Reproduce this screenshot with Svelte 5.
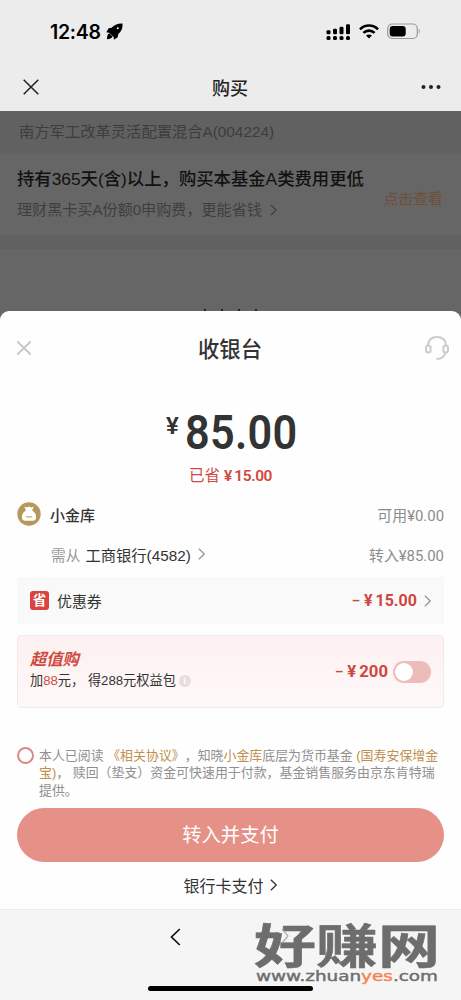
<script>
  let agreed = $state(false);
  let promoOn = $state(false);

  const bars = [4, 5.5, 7.5, 10];
</script>

{#snippet chevron(size, color, width)}
  <svg class="chevron" width={size * 0.6} height={size} viewBox="0 0 6 10">
    <path d="M0.7 0.7 L5.2 5 L0.7 9.3" fill="none" stroke={color} stroke-width={width} />
  </svg>
{/snippet}

<div class="screen">
  <div class="status">
    <span class="time">12:48</span>
    <svg class="rocket" width="17" height="17" viewBox="0 0 18 18">
      <path d="M17.500 .5C12 .3 8.500 2 6 5L2.800 5.600 .3 9.800l3 .4 4.800 4.600.3 3 4-2.800.6-3.400C16.300 8.800 17.700 6 17.500 .5z" />
      <path d="M3.300 10.800C1.500 12 1.100 14 1 17.200c3-.2 5-.8 6-2.900z" />
      <circle cx="12.500" cy="5.500" r="1.100" fill="#ececec" />
    </svg>
    <div class="status-right">
      <svg width="26" height="18" viewBox="0 0 26 18">
        {#each bars as h, i}
          <rect x={0.500 + i * 6.500} y={11.300 - h} width="4" height={h} rx="1.200" />
          <rect x={0.500 + i * 6.500} y="13" width="4" height="4" rx="1.500" />
        {/each}
      </svg>
      <svg class="wifi" width="20" height="15" viewBox="0 0 20 15">
        <g fill="none" stroke="#000" stroke-width="2.600">
          <path d="M1 5.300C6 .2 14 .2 19 5.300" />
          <path d="M4.400 8.900C7.600 5.800 12.400 5.800 15.600 8.900" />
        </g>
        <path d="M7 11.600C8.800 10 11.200 10 13 11.600L10 14.600z" />
      </svg>
      <svg class="battery" width="34" height="17" viewBox="0 0 34 17">
        <rect x="0.700" y="1" width="29.600" height="14.500" rx="4.500" fill="none" stroke="#999" stroke-width="1.200" />
        <rect x="2.700" y="3" width="16" height="10.500" rx="3" />
        <path d="M31.800 6v4.500c1.300-.6 1.300-3.900 0-4.500z" fill="#999" />
      </svg>
    </div>
  </div>

  <div class="navbar">
    <svg width="16" height="16" viewBox="0 0 16 16">
      <path d="M.7.7l14.600 14.600M15.300.7L.7 15.300" stroke="#222" stroke-width="1.500" />
    </svg>
    <h1>购买</h1>
    <svg width="20" height="6" viewBox="0 0 20 6" fill="#222">
      <circle cx="2.500" cy="3" r="2" /><circle cx="10" cy="3" r="2" /><circle cx="17.500" cy="3" r="2" />
    </svg>
  </div>

  <div class="backdrop">
    <div class="fund">南方军工改革灵活配置混合A(004224)</div>
    <div class="notice">
      <div>
        <div class="notice-title">持有365天(含)以上，购买本基金A类费用更低</div>
        <div class="notice-sub">理财黑卡买A份额0申购费，更能省钱 {@render chevron(12, '#3b3b3b', 0.9)}</div>
      </div>
      <span class="look">点击查看</span>
    </div>
    <div class="gap"></div>
    <div class="peek"><i></i><i></i><i></i><i></i></div>
  </div>

  <div class="sheet-wrap">
    <div class="sheet">
      <div class="sheet-head">
        <svg width="16" height="16" viewBox="0 0 16 16">
          <path d="M1.300 1.300l13.400 13.400M14.700 1.300l-13.400 13.400" stroke="#c4c4c4" stroke-width="1.900" />
        </svg>
        <h2>收银台</h2>
        <svg width="26" height="26" viewBox="0 0 26 26" fill="none" stroke="#ccc" stroke-width="2">
          <path d="M3.800 10.500C4.300 5 8 2 13 2s8.700 3 9.200 8.500" />
          <rect x="2" y="10.500" width="4.600" height="7" rx="2.300" />
          <rect x="19.400" y="10.500" width="4.600" height="7" rx="2.300" />
          <path d="M21.500 17.500C20.500 21.500 17.500 24 12.500 24" />
        </svg>
      </div>

      <div class="amount"><span class="yen">¥</span><span class="num">85.00</span></div>
      <div class="saved">已省<b>¥</b><b class="value">15.00</b></div>

      <div class="row">
        <svg width="24" height="24" viewBox="0 0 24 24">
          <circle cx="12" cy="12" r="11.700" fill="#b5995c" />
          <path d="M7.300 4.600l2.400 1 2.300-1.200 2.300 1.200 2.400-1-1.600 4c2.900 1.500 4.400 4.600 3.900 7.500-.3 1.900-1.300 2.700-3.100 2.700H8.100c-1.800 0-2.800-.8-3.100-2.700-.5-2.900 1-6 3.900-7.500z" fill="#fff" />
          <path d="M8.800 14.700q3.200 .8 6.400 0" fill="none" stroke="#b5995c" stroke-width="1" />
        </svg>
        <span class="account">小金库</span>
        <span class="right">可用¥0.00</span>
      </div>
      <div class="row second">
        <span class="from">需从</span>
        <span class="bank">工商银行(4582)</span>
        {@render chevron(12, '#999', 1.100)}
        <span class="right">转入¥85.00</span>
      </div>

      <div class="coupon">
        <span class="tag">省</span>
        <span class="coupon-name">优惠券</span>
        <span class="price"><em class="minus">–</em><em>¥</em>15.00</span>
        {@render chevron(12, '#999', 1.100)}
      </div>

      <div class="promo">
        <div class="promo-text">
          <div class="promo-title">超值购</div>
          <div class="promo-sub">加<span>88</span>元， 得288元权益包<i>i</i></div>
        </div>
        <span class="price big"><em class="minus">–</em><em>¥</em>200</span>
        <button class="switch" class:on={promoOn} aria-label="超值购" onclick={() => (promoOn = !promoOn)}><i></i></button>
      </div>

      <div class="terms">
        <button class="radio" class:agreed aria-label="同意" onclick={() => (agreed = !agreed)}></button>
        <p>
          本人已阅读 <a href="#agreement">《相关协议》</a>，知晓<a href="#vault">小金库</a>底层为货币基金 <a href="#fund">(国寿安保增金<br />宝)</a>， 赎回（垫支）资金可快速用于付款，基金销售服务由京东肯特瑞<br />提供。
        </p>
      </div>

      <button class="pay">转入并支付</button>
      <div class="bank-pay">银行卡支付 {@render chevron(12, '#333', 1.100)}</div>
    </div>
  </div>

  <div class="toolbar">
    <svg class="back" width="11" height="18" viewBox="0 0 11 18">
      <path d="M9.800 1L1.500 9l8.300 8" fill="none" stroke="#111" stroke-width="1.700" />
    </svg>
    <div class="home"></div>
    <svg class="watermark" width="192" height="72" viewBox="0 0 192 72">
      <text class="mark" x="5" y="50" textLength="186" lengthAdjust="spacingAndGlyphs">好赚网</text>
      <path d="M33 16l6 7-6 7" fill="none" stroke="#aaa" stroke-width="1.200" />
      <text class="url" x="7" y="68" textLength="182" lengthAdjust="spacingAndGlyphs">www.zhuan<tspan>yes</tspan>.com</text>
    </svg>
  </div>
</div>

<style>
  :global(body) {
    background: #f5f5f5;
  }

  .screen {
    width: 461px;
    height: 1000px;
    overflow: hidden;
    display: flex;
    flex-direction: column;
    font-family: "Liberation Sans", "Noto Sans CJK SC", sans-serif;
    text-spacing-trim: space-all;
    white-space: nowrap;
    color: #333;
  }

  svg {
    flex: none;
    display: block;
  }

  h1, h2, p {
    margin: 0;
    font-weight: 500;
  }

  button {
    border: none;
    padding: 0;
    font-family: inherit;
  }

  .status {
    height: 63px;
    flex: none;
    box-sizing: border-box;
    padding: 0 40px 0 50px;
    display: flex;
    align-items: center;
    background: #ececec;
  }

  .time {
    font: 600 19.500px/24px Inter, sans-serif;
    letter-spacing: -0.300px;
    color: #000;
  }

  .rocket {
    margin-left: 5px;
  }

  .status-right {
    margin-left: auto;
    display: flex;
    align-items: center;
  }

  .wifi {
    margin-left: 7px;
  }

  .battery {
    margin-left: 8px;
  }

  .navbar {
    height: 48px;
    flex: none;
    box-sizing: border-box;
    padding: 0 20px 0 23px;
    display: flex;
    align-items: center;
    justify-content: space-between;
    background: #ececec;
  }

  h1 {
    font-size: 18px;
    color: #222;
  }

  .backdrop {
    height: 200px;
    flex: none;
    background: #666;
  }

  .fund {
    height: 43px;
    line-height: 42px;
    padding-left: 19px;
    background: #616161;
    font-size: 15.300px;
    color: #3d3d3d;
  }

  .notice {
    height: 81px;
    padding: 0 18px 0 17px;
    display: flex;
    align-items: center;
    justify-content: space-between;
  }

  .notice-title {
    font-size: 17.350px;
    line-height: 28px;
    margin-top: -1px;
    font-weight: 500;
    color: #111;
  }

  .notice-sub {
    display: flex;
    align-items: center;
    gap: 8px;
    margin-top: 4px;
    font-size: 15.100px;
    line-height: 26px;
    color: #3e3e3e;
  }

  .look {
    margin-top: 6px;
    font-size: 14.900px;
    color: #6f4f38;
  }

  .gap {
    height: 14px;
    background: #616161;
  }

  .peek {
    height: 62px;
    display: flex;
    align-items: flex-end;
    justify-content: center;
    gap: 15px;
  }

  .peek i {
    width: 2px;
    height: 2px;
    background: #222;
  }

  .sheet-wrap {
    flex: none;
    height: 598px;
    background: #666;
  }

  .sheet {
    height: 100%;
    box-sizing: border-box;
    padding: 0 17px;
    border-radius: 9px 9px 0 0;
    background: #fefefe;
    display: flex;
    flex-direction: column;
  }

  .sheet-head {
    height: 74px;
    flex: none;
    margin-left: -1px;
    margin-right: -6px;
    display: flex;
    align-items: center;
    justify-content: space-between;
  }

  h2 {
    font-size: 21.300px;
    margin-left: 4px;
    margin-top: -2px;
  }

  .amount {
    height: 50px;
    margin-top: 21px;
    flex: none;
    display: flex;
    justify-content: center;
    font-family: Roboto, sans-serif;
    font-weight: 600;
    color: #333;
  }

  .yen {
    font-size: 24px;
    line-height: 40px;
    margin-right: 6px;
  }

  .num {
    width: 110px;
    font-size: 48px;
    line-height: 53px;
    letter-spacing: 0.300px;
    transform: scaleX(0.9);
    transform-origin: left;
  }

  .saved {
    height: 24px;
    flex: none;
    margin-top: 8px;
    display: flex;
    justify-content: center;
    font-size: 15.500px;
    line-height: 24px;
    color: #d0493f;
  }

  .saved b {
    margin-left: 4px;
    font-family: Roboto, sans-serif;
    font-weight: 600;
  }

  .saved .value {
    margin-left: 2px;
    letter-spacing: -0.400px;
  }

  .row {
    height: 40px;
    flex: none;
    margin-top: 6px;
    display: flex;
    align-items: center;
  }

  .row.second {
    margin-top: 0;
    padding-left: 34px;
  }

  .account {
    margin-left: 9px;
    font-size: 15px;
    font-weight: 500;
  }

  .from {
    font-size: 14.700px;
    color: #999;
  }

  .bank {
    margin: 0 7px 0 5px;
    font-size: 15.300px;
  }

  .right {
    margin-left: auto;
    font-family: Roboto, "Noto Sans CJK SC", sans-serif;
    font-size: 14.900px;
    color: #8c8c8c;
  }

  .coupon {
    height: 47px;
    flex: none;
    margin-top: 3px;
    padding: 0 13px;
    display: flex;
    align-items: center;
    background: #f9f9f9;
  }

  .tag {
    width: 19px;
    height: 19px;
    border-radius: 3px;
    background: #d8453f;
    color: #fff;
    font-size: 13.500px;
    font-weight: 700;
    line-height: 19px;
    text-align: center;
  }

  .coupon-name {
    margin-left: 8px;
    font-size: 14.900px;
  }

  .price {
    display: flex;
    align-items: center;
    margin: 0 7px 0 auto;
    font-family: Roboto, sans-serif;
    font-size: 16px;
    font-weight: 700;
    color: #cc4740;
  }

  .price em {
    font-style: normal;
    margin-right: 3px;
  }

  .price .minus {
    font-size: 13px;
    margin-right: 4px;
  }

  .price.big {
    font-size: 16.700px;
    margin-right: 5px;
  }

  .promo {
    height: 73px;
    flex: none;
    box-sizing: border-box;
    margin-top: 11px;
    padding: 0 12px 0 12px;
    display: flex;
    align-items: center;
    border: 1px solid #f3e9e9;
    border-radius: 4px;
    background: linear-gradient(#fdf0f0, #fef9f9);
  }

  .promo-title {
    margin-top: -2px;
    font-size: 16.300px;
    line-height: 21px;
    font-weight: 700;
    font-style: italic;
    color: #cf4a41;
  }

  .promo-sub {
    display: flex;
    align-items: center;
    white-space: pre;
    font-size: 13.200px;
    line-height: 22px;
  }

  .promo-sub span {
    color: #cf4a41;
  }

  .promo-sub i {
    width: 12px;
    height: 12px;
    margin-left: 3px;
    border-radius: 50%;
    background: #e6dede;
    color: #fff;
    font: 700 9px/12px "Liberation Sans", sans-serif;
    text-align: center;
  }

  .switch {
    width: 38px;
    height: 22px;
    box-sizing: border-box;
    padding: 2px;
    border-radius: 11px;
    background: #ecbcba;
    display: flex;
  }

  .switch i {
    width: 18px;
    height: 18px;
    border-radius: 50%;
    background: #fff;
  }

  .switch.on {
    justify-content: flex-end;
    background: #d8453f;
  }

  .terms {
    height: 52px;
    flex: none;
    margin-top: 39px;
    display: flex;
    align-items: flex-start;
  }

  .radio {
    width: 17px;
    height: 17px;
    flex: none;
    box-sizing: border-box;
    border: 2px solid #d88a88;
    border-radius: 50%;
    background: none;
  }

  .radio.agreed {
    background: #d8453f;
  }

  .terms p {
    margin-left: 5px;
    font-size: 12.930px;
    line-height: 17.300px;
    font-weight: 400;
    color: #909090;
  }

  .terms a {
    color: #c0904e;
    text-decoration: none;
  }

  .pay {
    height: 54px;
    flex: none;
    box-sizing: border-box;
    margin-top: 9px;
    padding-bottom: 2px;
    border-radius: 27px;
    background: #e59187;
    color: #fff;
    font-size: 19.300px;
    font-weight: 400;
  }

  .bank-pay {
    height: 46px;
    display: flex;
    align-items: center;
    justify-content: center;
    gap: 7px;
    font-size: 16px;
  }

  .toolbar {
    height: 91px;
    flex: none;
    box-sizing: border-box;
    border-top: 1px solid #ebebeb;
    background: #f5f5f5;
    position: relative;
  }

  .back {
    margin: 18px 0 0 170px;
  }

  .home {
    width: 165px;
    height: 5px;
    margin: 40px 0 0 148px;
    border-radius: 3px;
    background: #000;
  }

  /* site mark lies over the toolbar */
  .watermark {
    position: absolute;
    left: 249px;
    top: 3px;
    overflow: visible;
  }

  .watermark text {
    fill: #6d6d6d;
  }

  .mark {
    font: 700 47px "Noto Sans CJK SC", sans-serif;
    stroke: #6d6d6d;
    stroke-width: 0.500px;
    stroke-linejoin: round;
  }

  .url {
    font: 400 13.500px "DejaVu Sans", sans-serif;
    stroke: #6d6d6d;
    stroke-width: 0.400px;
  }

  .url tspan {
    fill: #f5834f;
    stroke: #f5834f;
  }
</style>
